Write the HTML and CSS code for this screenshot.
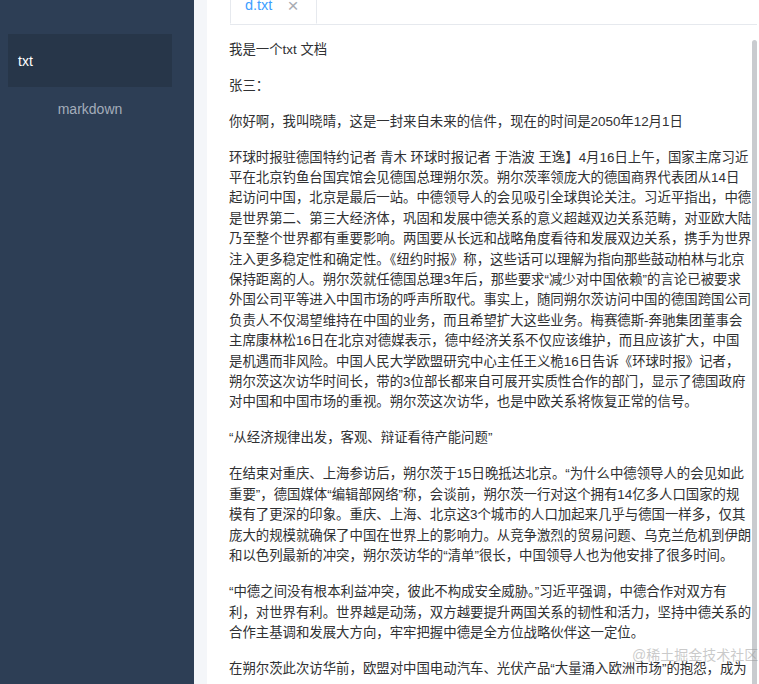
FILE: index.html
```html
<!DOCTYPE html>
<html lang="zh">
<head>
<meta charset="utf-8">
<title>d.txt</title>
<link rel="stylesheet" href="styles.css">
</head>
<body>
<aside class="sidebar">
  <div class="menu-item active">txt</div>
  <div class="menu-item">markdown</div>
</aside>
<div class="gutter"></div>
<main class="main">
  <div class="tabs-header">
    <div class="tab">
      <span class="tab-label">d.txt</span>
      <span class="tab-close">×</span>
    </div>
  </div>
  <div class="doc">
    <p>我是一个txt 文档</p>
    <p>张三：</p>
    <p>你好啊，我叫晓晴，这是一封来自未来的信件，现在的时间是2050年12月1日</p>
    <p>环球时报驻德国特约记者 青木 环球时报记者 于浩波 王逸】4月16日上午，国家主席习近平在北京钓鱼台国宾馆会见德国总理朔尔茨。朔尔茨率领庞大的德国商界代表团从14日起访问中国，北京是最后一站。中德领导人的会见吸引全球舆论关注。习近平指出，中德是世界第二、第三大经济体，巩固和发展中德关系的意义超越双边关系范畴，对亚欧大陆乃至整个世界都有重要影响。两国要从长远和战略角度看待和发展双边关系，携手为世界注入更多稳定性和确定性。《纽约时报》称，这些话可以理解为指向那些鼓动柏林与北京保持距离的人。朔尔茨就任德国总理3年后，那些要求“减少对中国依赖”的言论已被要求外国公司平等进入中国市场的呼声所取代。事实上，随同朔尔茨访问中国的德国跨国公司负责人不仅渴望维持在中国的业务，而且希望扩大这些业务。梅赛德斯-奔驰集团董事会主席康林松16日在北京对德媒表示，德中经济关系不仅应该维护，而且应该扩大，中国是机遇而非风险。中国人民大学欧盟研究中心主任王义桅16日告诉《环球时报》记者，朔尔茨这次访华时间长，带的3位部长都来自可展开实质性合作的部门，显示了德国政府对中国和中国市场的重视。朔尔茨这次访华，也是中欧关系将恢复正常的信号。</p>
    <p>“从经济规律出发，客观、辩证看待产能问题”</p>
    <p>在结束对重庆、上海参访后，朔尔茨于15日晚抵达北京。“为什么中德领导人的会见如此重要”，德国媒体“编辑部网络”称，会谈前，朔尔茨一行对这个拥有14亿多人口国家的规模有了更深的印象。重庆、上海、北京这3个城市的人口加起来几乎与德国一样多，仅其庞大的规模就确保了中国在世界上的影响力。从竞争激烈的贸易问题、乌克兰危机到伊朗和以色列最新的冲突，朔尔茨访华的“清单”很长，中国领导人也为他安排了很多时间。</p>
    <p>“中德之间没有根本利益冲突，彼此不构成安全威胁。”习近平强调，中德合作对双方有利，对世界有利。世界越是动荡，双方越要提升两国关系的韧性和活力，坚持中德关系的合作主基调和发展大方向，牢牢把握中德是全方位战略伙伴这一定位。</p>
    <p>在朔尔茨此次访华前，欧盟对中国电动汽车、光伏产品“大量涌入欧洲市场”的抱怨，成为</p>
  </div>
  <div class="scroll-thumb"></div>
  <div class="watermark">@稀土掘金技术社区</div>
</main>
</body>
</html>
```
FILE: styles.css
```css
html, body {
  margin: 0;
  padding: 0;
}
body {
  width: 759px;
  height: 684px;
  overflow: hidden;
  display: flex;
  font-family: "Liberation Sans", "Noto Sans CJK SC", sans-serif;
}
.sidebar {
  width: 194px;
  flex: none;
  background: #2d3e55;
  padding: 34px 22px 0 8px;
  box-sizing: border-box;
}
.menu-item {
  height: 43px;
  display: flex;
  align-items: center;
  justify-content: center;
  font-size: 14px;
  color: #a4adba;
}
.menu-item.active {
  height: 53px;
  justify-content: flex-start;
  padding-left: 10px;
  background: #273649;
  color: #ffffff;
}
.gutter {
  width: 13px;
  flex: none;
  background: #f4f6f9;
}
.main {
  flex: 1;
  position: relative;
  background: #ffffff;
  overflow: hidden;
}
.tabs-header {
  margin-top: -16px;
  margin-left: 23px;
  margin-right: 2px;
  height: 40px;
  border-bottom: 1px solid #e6e9ee;
  display: flex;
}
.tab {
  height: 40px;
  box-sizing: border-box;
  border-left: 1px solid #e6e9ee;
  border-right: 1px solid #e6e9ee;
  border-bottom: 1px solid #ffffff;
  padding: 3px 17px 0 14px;
  display: flex;
  align-items: center;
  gap: 15px;
  background: #fff;
}
.tab-label {
  color: #409eff;
  font-size: 14.5px;
}
.tab-close {
  color: #a8abb2;
  font-size: 19px;
  line-height: 1;
}
.doc {
  padding: 14.6px 0 0 22px;
  width: 523.3px;
  color: #303133;
  font-size: 13.4px;
  line-height: 20.4px;
}
.doc p {
  margin: 0 0 15.6px;
}
.scroll-thumb {
  position: absolute;
  left: 545px;
  top: 40px;
  width: 5px;
  height: 720px;
  border-radius: 3px;
  background: #c9cbcf;
}
.watermark {
  position: absolute;
  left: 425px;
  top: 644px;
  font-size: 14px;
  white-space: nowrap;
  color: rgba(150, 150, 150, 0.5);
}
```
